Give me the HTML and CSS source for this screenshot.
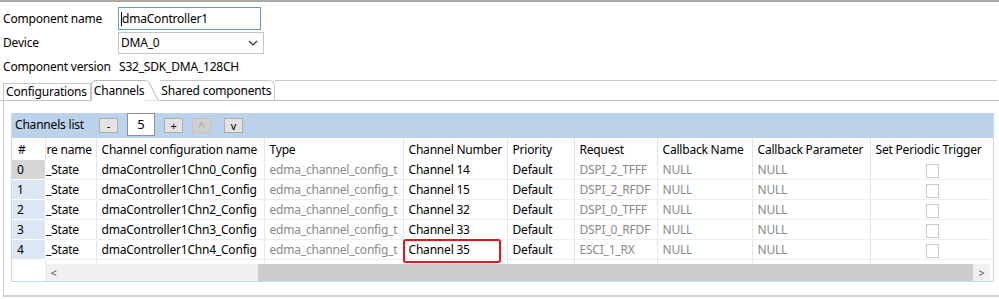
FILE: index.html
```html
<!DOCTYPE html>
<html lang="en">

<head>
	<meta charset="UTF-8">
	<title>Channels</title>
	<link rel="stylesheet" href="styles.css">
</head>

<body>

	<div class="form">
		<label>Component name</label>
		<div class="text-input"><span class="caret"></span>dmaController1</div>
		<label>Device</label>
		<div class="combo">
			<span>DMA_0</span>
			<svg width="10" height="6" viewBox="0 0 10 6"><path d="M1 1 L5 5 L9 1" fill="none" stroke="#333" stroke-width="1.2"/></svg>
		</div>
		<label>Component version</label>
		<div class="value">S32_SDK_DMA_128CH</div>
	</div>

	<div class="tabs">
		<div class="tab">Configurations</div>
		<div class="tab active">Channels</div>
		<svg class="tab-slant" width="16" height="21" viewBox="0 0 16 21"><path d="M0 0.5 C4 0.5 4 1 7 6 L12 16 C14 19.5 14 20.5 16 20.5" fill="#fff" stroke="#b8b8b8"/><path d="M0 21 L16 21" stroke="#fff"/></svg>
		<div class="tab shared">Shared components</div>
		<div class="tab-fill"></div>
	</div>

	<div class="panel">
		<div class="list">
			<div class="list-bar">
				<span class="list-title">Channels list</span>
				<span class="btn">-</span>
				<span class="count">5</span>
				<span class="btn">+</span>
				<span class="btn disabled">^</span>
				<span class="btn">v</span>
			</div>

			<div class="grid-view">
				<table class="grid">
					<colgroup>
						<col style="width:33px">
						<col style="width:51px">
						<col style="width:168px">
						<col style="width:139px">
						<col style="width:104px">
						<col style="width:67px">
						<col style="width:83px">
						<col style="width:95px">
						<col style="width:118px">
						<col style="width:120px">
					</colgroup>
					<thead>
						<tr>
							<td class="num">#</td>
							<td class="cut">re name</td>
							<td>Channel configuration name</td>
							<td>Type</td>
							<td>Channel Number</td>
							<td>Priority</td>
							<td>Request</td>
							<td>Callback Name</td>
							<td>Callback Parameter</td>
							<td>Set Periodic Trigger</td>
						</tr>
					</thead>
					<tbody>
						<tr>
							<td class="num focus">0</td>
							<td class="cut">_State</td>
							<td>dmaController1Chn0_Config</td>
							<td class="dim">edma_channel_config_t</td>
							<td>Channel 14</td>
							<td>Default</td>
							<td class="dim">DSPI_2_TFFF</td>
							<td class="dim">NULL</td>
							<td class="dim">NULL</td>
							<td class="check"><span class="box"></span></td>
						</tr>
						<tr>
							<td class="num">1</td>
							<td class="cut">_State</td>
							<td>dmaController1Chn1_Config</td>
							<td class="dim">edma_channel_config_t</td>
							<td>Channel 15</td>
							<td>Default</td>
							<td class="dim">DSPI_2_RFDF</td>
							<td class="dim">NULL</td>
							<td class="dim">NULL</td>
							<td class="check"><span class="box"></span></td>
						</tr>
						<tr>
							<td class="num">2</td>
							<td class="cut">_State</td>
							<td>dmaController1Chn2_Config</td>
							<td class="dim">edma_channel_config_t</td>
							<td>Channel 32</td>
							<td>Default</td>
							<td class="dim">DSPI_0_TFFF</td>
							<td class="dim">NULL</td>
							<td class="dim">NULL</td>
							<td class="check"><span class="box"></span></td>
						</tr>
						<tr>
							<td class="num">3</td>
							<td class="cut">_State</td>
							<td>dmaController1Chn3_Config</td>
							<td class="dim">edma_channel_config_t</td>
							<td>Channel 33</td>
							<td>Default</td>
							<td class="dim">DSPI_0_RFDF</td>
							<td class="dim">NULL</td>
							<td class="dim">NULL</td>
							<td class="check"><span class="box"></span></td>
						</tr>
						<tr>
							<td class="num">4</td>
							<td class="cut">_State</td>
							<td>dmaController1Chn4_Config</td>
							<td class="dim">edma_channel_config_t</td>
							<td class="marked">Channel 35<span class="mark"></span></td>
							<td>Default</td>
							<td class="dim">ESCI_1_RX</td>
							<td class="dim">NULL</td>
							<td class="dim">NULL</td>
							<td class="check"><span class="box"></span></td>
						</tr>
						<tr class="empty">
							<td class="blank"></td>
							<td></td><td></td><td></td><td></td><td></td><td></td><td></td><td></td><td></td>
						</tr>
					</tbody>
				</table>
			</div>

			<div class="hscroll">
				<span class="arrow">&lt;</span>
				<div class="track"><div class="thumb"></div></div>
				<span class="arrow right">&gt;</span>
			</div>
		</div>
	</div>

</body>

</html>
```

FILE: styles.css
```css
body {
	background: #fff;
	border-top: 2px solid #a9a9a9;
	color: #000;
	font: 12px "Noto Sans", sans-serif;
	letter-spacing: -0.2px;
	margin: 0;
}

/* form at the top */

.form {
	align-items: center;
	display: grid;
	grid-template-columns: 115px auto;
	grid-template-rows: 23px 23px 22px;
	justify-items: start;
	padding: 5px 0 0 3px;
	row-gap: 1px;
}

.text-input {
	align-items: center;
	border: 1px solid #5b9ee0;
	box-sizing: border-box;
	display: flex;
	height: 23px;
	padding-left: 2px;
	width: 143px;
}

.caret {
	background: #000;
	display: inline-block;
	height: 14px;
	width: 1px;
}

.combo {
	align-items: center;
	background: #fff;
	border: 1px solid #c4c4c4;
	box-sizing: border-box;
	display: flex;
	height: 22px;
	justify-content: space-between;
	padding: 0 5px 0 2px;
	width: 146px;
}

.value {
	padding-left: 1px;
}

/* tabs */

.tabs {
	align-items: flex-end;
	border-bottom: 1px solid #c4c4c4;
	display: flex;
	height: 20px;
	margin-top: 3px;
	padding-left: 3px;
}

.tab {
	border: 1px solid #c8c8c8;
	border-bottom: 0;
	box-sizing: border-box;
	height: 17px;
	line-height: 15px;
	padding: 0 3px 0 2px;
}

.tab.active {
	background: #fff;
	border-color: #b8b8b8;
	border-radius: 5px 0 0 0;
	border-right: 0;
	height: 21px;
	line-height: 20px;
	margin-bottom: -1px;
	padding: 0 0 0 2px;
}

.tab-slant {
	display: block;
	margin-bottom: -1px;
}

.tab.shared {
	border-left: 0;
	border-radius: 0 6px 0 0;
	height: 20px;
	line-height: 19px;
	padding: 0 3px 0 1px;
}

.tab-fill {
	align-self: flex-start;
	border-top: 1px solid #c8c8c8;
	flex: 1;
	margin-right: 2px;
}

/* panel with the channel list */

.panel {
	border-bottom: 2px solid #d2d2d2;
	border-left: 1px solid #c8c8c8;
	height: 182px;
	margin-left: 3px;
	padding: 12px 0 0 7px;
}

.list {
	border: 1px solid #c6d9ee;
	border-top: 0;
	width: 981px;
}

.list-bar {
	align-items: center;
	background: #bcd2ea;
	display: flex;
	height: 25px;
	padding-left: 3px;
}

.list-title {
	margin-right: 15px;
	margin-top: -3px;
}

.btn {
	background: #e3e3e3;
	border: 1px solid #adadad;
	box-sizing: border-box;
	font-size: 11px;
	height: 15px;
	line-height: 13px;
	margin-right: 9px;
	text-align: center;
	width: 19px;
}

.btn.disabled {
	background: #cfcfcf;
	border-color: #c4c4c4;
	color: #a0a0a0;
	margin-right: 13px;
}

.count {
	align-self: flex-start;
	background: #fff;
	border: 1px solid #8e8e8e;
	box-sizing: border-box;
	font-size: 13px;
	height: 23px;
	line-height: 21px;
	margin-right: 9px;
	text-align: center;
	width: 28px;
}

.grid-view {
	height: 126px;
	overflow: hidden;
}

.grid {
	border-collapse: collapse;
	border-spacing: 0;
	table-layout: fixed;
	width: 978px;
}

.grid td {
	border-bottom: 1px solid #eeeeee;
	border-right: 1px solid #e6e6e6;
	height: 19px;
	line-height: 19px;
	overflow: hidden;
	padding: 0 0 0 5px;
	white-space: nowrap;
}

.grid thead td {
	border-bottom: 0;
	height: 22px;
}

.grid td:last-child {
	border-right: 0;
}

.grid td.cut {
	padding-left: 1px;
}

.grid tbody .num {
	background: #dce6f4;
	border-bottom: 1px solid #fff;
	border-right: 0;
}

.grid tbody .num.focus {
	background: #d6d6d6;
}

.grid thead .num {
	padding-left: 6px;
}

.grid tbody .blank {
	background: #fff;
}

.dim {
	color: #8a8a8a;
}

.check {
	text-align: center;
}

.box {
	border: 1px solid #cbcbcb;
	box-sizing: border-box;
	display: inline-block;
	height: 14px;
	vertical-align: middle;
	width: 13px;
}

.grid td.marked {
	overflow: visible;
	position: relative;
}

.mark {
	border: 2px solid #e3161c;
	border-radius: 3px;
	box-sizing: border-box;
	height: 24px;
	left: -1px;
	position: absolute;
	top: -1px;
	width: 98px;
}

/* horizontal scroll bar */

.hscroll {
	align-items: center;
	background: #f0f0f0;
	display: flex;
	height: 17px;
	margin-left: 33px;
	width: 945px;
}

.arrow {
	color: #555;
	font-size: 11px;
	text-align: center;
	width: 17px;
}

.track {
	flex: 1;
	height: 100%;
	padding-left: 196px;
}

.thumb {
	background: #cdcdcd;
	height: 100%;
}
```
